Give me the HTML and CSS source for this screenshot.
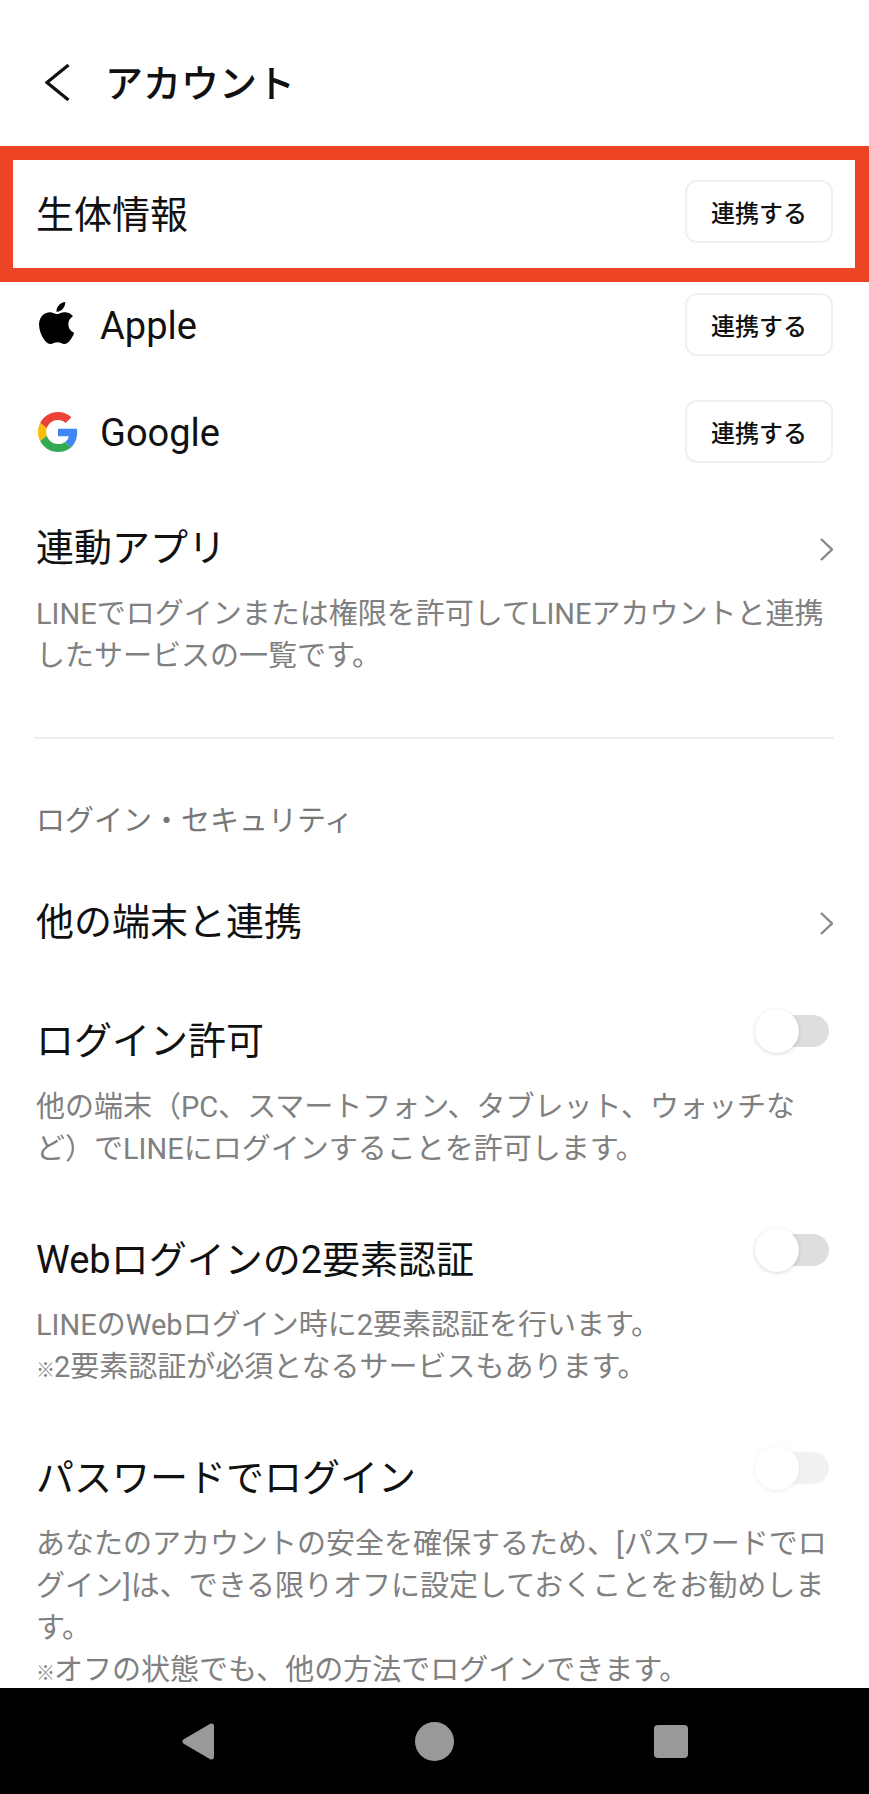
FILE: index.html
```html
<!DOCTYPE html>
<html lang="ja">
<head>
<meta charset="utf-8">
<title>アカウント</title>
<link rel="stylesheet" href="styles.css">
</head>
<body>
<main class="content">
  <header class="header">
    <svg class="back" viewBox="0 0 25 37" aria-hidden="true"><path d="M23.5 1 2 18.5 23.5 36"/></svg>
    <h1 class="title">アカウント</h1>
  </header>

  <section class="highlight">
    <span class="row-label">生体情報</span>
    <button class="link-btn">連携する</button>
  </section>

  <section class="provider provider-apple">
    <span class="provider-icon">
      <svg class="apple" viewBox="2.2 0 19.5 24" preserveAspectRatio="none" aria-hidden="true"><path d="M12.152 6.896c-.948 0-2.415-1.078-3.96-1.04-2.04.027-3.91 1.183-4.961 3.014-2.117 3.675-.546 9.103 1.519 12.09 1.013 1.454 2.208 3.09 3.792 3.039 1.52-.065 2.09-.987 3.935-.987 1.831 0 2.35.987 3.96.948 1.637-.026 2.676-1.48 3.676-2.948 1.156-1.688 1.636-3.325 1.662-3.415-.039-.013-3.182-1.221-3.22-4.857-.026-3.04 2.48-4.494 2.597-4.559-1.429-2.09-3.623-2.324-4.39-2.376-2-.156-3.675 1.09-4.61 1.09zM15.53 3.83c.843-1.012 1.4-2.427 1.245-3.83-1.207.052-2.662.805-3.532 1.818-.78.896-1.454 2.338-1.273 3.714 1.338.104 2.715-.688 3.559-1.701"/></svg>
    </span>
    <span class="row-label">Apple</span>
    <button class="link-btn">連携する</button>
  </section>

  <section class="provider provider-google">
    <span class="provider-icon">
      <svg class="google" viewBox="0 0 48 48" aria-hidden="true">
        <path fill="#EA4335" d="M24 9.5c3.54 0 6.71 1.22 9.21 3.6l6.85-6.85C35.9 2.38 30.47 0 24 0 14.62 0 6.51 5.38 2.56 13.22l7.98 6.19C12.43 13.72 17.74 9.5 24 9.5z"/>
        <path fill="#4285F4" d="M46.98 24.55c0-1.57-.15-3.09-.38-4.55H24v9.02h12.94c-.58 2.96-2.26 5.48-4.78 7.18l7.73 6c4.51-4.18 7.09-10.36 7.09-17.65z"/>
        <path fill="#FBBC05" d="M10.53 28.59c-.48-1.45-.76-2.99-.76-4.59s.27-3.14.76-4.59l-7.98-6.19C.92 16.46 0 20.12 0 24c0 3.88.92 7.54 2.56 10.78l7.97-6.19z"/>
        <path fill="#34A853" d="M24 48c6.48 0 11.93-2.13 15.89-5.81l-7.73-6c-2.15 1.45-4.92 2.3-8.16 2.3-6.26 0-11.57-4.22-13.47-9.91l-7.98 6.19C6.51 42.62 14.62 48 24 48z"/>
      </svg>
    </span>
    <span class="row-label">Google</span>
    <button class="link-btn">連携する</button>
  </section>

  <section class="setting s-apps">
    <div class="setting-head">
      <span class="row-label">連動アプリ</span>
      <svg class="chev" viewBox="0 0 13 23" aria-hidden="true"><path d="M1 1l11 10.5L1 22"/></svg>
    </div>
    <p class="desc d-apps">LINEでログインまたは権限を許可してLINEアカウントと連携したサービスの一覧です。</p>
  </section>

  <hr class="divider">

  <h2 class="section-label">ログイン・セキュリティ</h2>

  <section class="setting s-devices">
    <div class="setting-head">
      <span class="row-label">他の端末と連携</span>
      <svg class="chev" viewBox="0 0 13 23" aria-hidden="true"><path d="M1 1l11 10.5L1 22"/></svg>
    </div>
  </section>

  <section class="setting s-allow">
    <div class="setting-head">
      <span class="row-label">ログイン許可</span>
      <span class="toggle"><span class="knob"></span></span>
    </div>
    <p class="desc d-allow">他の端末（PC、スマートフォン、タブレット、ウォッチなど）でLINEにログインすることを許可します。</p>
  </section>

  <section class="setting s-web">
    <div class="setting-head">
      <span class="row-label">Webログインの2要素認証</span>
      <span class="toggle"><span class="knob"></span></span>
    </div>
    <p class="desc d-web">LINEのWebログイン時に2要素認証を行います。<br><span class="note-mark">※</span>2要素認証が必須となるサービスもあります。</p>
  </section>

  <section class="setting s-pass">
    <div class="setting-head">
      <span class="row-label">パスワードでログイン</span>
      <span class="toggle toggle-disabled"><span class="knob"></span></span>
    </div>
    <p class="desc d-pass">あなたのアカウントの安全を確保するため、[パスワードでログイン]は、できる限りオフに設定しておくことをお勧めします。<br><span class="note-mark">※</span>オフの状態でも、他の方法でログインできます。</p>
  </section>
</main>

<nav class="navbar" aria-label="システムナビゲーション">
  <span class="nav-cell"><svg class="nav-back" viewBox="0 0 33 37" aria-hidden="true"><path d="M29.5 3 3 18.5 29.5 34z"/></svg></span>
  <span class="nav-cell"><span class="nav-home"></span></span>
  <span class="nav-cell"><span class="nav-recent"></span></span>
</nav>
</body>
</html>
```

FILE: styles.css
```css
* { box-sizing: border-box; }

html, body { margin: 0; padding: 0; }

body {
  width: 869px;
  height: 1794px;
  display: flex;
  flex-direction: column;
  overflow: hidden;
  background: #fff;
  color: #111;
  font-family: Roboto, "Noto Sans CJK JP", sans-serif;
}

.content {
  flex: 1;
  min-height: 0;
}

.header {
  height: 146px;
  padding: 18px 0 0 45px;
  display: flex;
  align-items: center;
}

.back {
  width: 25px;
  height: 37px;
  fill: none;
  stroke: #111;
  stroke-width: 3.2;
}

.title {
  margin: 4px 0 0 35px;
  font-size: 38px;
  line-height: 50px;
  font-weight: 500;
  color: #111;
}

.row-label {
  font-size: 38px;
  line-height: 50px;
  font-weight: 400;
  color: #111;
}

.highlight {
  height: 136px;
  border: 14px solid #ee4426;
  border-left-width: 13px;
  padding: 6px 22px 11px 23px;
  display: flex;
  align-items: center;
  justify-content: space-between;
}

.highlight .row-label { margin-top: 6px; }

.link-btn {
  width: 148px;
  height: 63px;
  margin-left: auto;
  padding: 0;
  background: #fff;
  border: 2px solid #f0f0f0;
  border-radius: 12px;
  font-family: inherit;
  font-size: 24px;
  font-weight: 500;
  color: #111;
}

.provider {
  height: 63px;
  padding: 0 36px;
  display: flex;
  align-items: center;
}

.provider .row-label { margin-top: 2px; }

.provider-apple { margin-top: 11px; }
.provider-google { margin-top: 44px; }

.provider-icon {
  width: 64px;
  display: flex;
}

.apple {
  width: 35px;
  height: 42px;
  margin: -4px 0 0 3px;
  fill: #000;
}

.google {
  width: 40px;
  height: 40px;
  margin: 1px 0 0 2px;
}

.setting { padding: 0 36px; }

.setting-head {
  display: flex;
  align-items: center;
  justify-content: space-between;
  height: 50px;
}

.s-apps { margin-top: 60px; }
.s-devices { margin-top: 55px; }
.s-allow { margin-top: 69px; }
.s-web { margin-top: 65px; }
.s-pass { margin-top: 65px; }

.chev {
  width: 13px;
  height: 23px;
  margin-top: 2px;
  fill: none;
  stroke: #888;
  stroke-width: 2.4;
}

.desc {
  margin: 0;
  font-size: 29px;
  line-height: 42px;
  color: #808080;
}

.note-mark {
  font-size: 19px;
  line-height: 1;
  letter-spacing: -1px;
}

.d-apps { margin-top: 20px; }
.d-allow { margin-top: 20px; }
.d-web { margin-top: 19px; }
.d-pass { margin-top: 20px; }

.divider {
  height: 2px;
  margin: 60px 35px 0 34px;
  border: 0;
  background: #eeeeee;
}

.section-label {
  margin: 61px 0 0 36px;
  font-size: 29px;
  line-height: 42px;
  font-weight: 400;
  color: #777;
}

.toggle {
  position: relative;
  width: 54px;
  height: 32px;
  margin: -20px 4px 0 0;
  border-radius: 16px;
  background: #dedede;
}

.knob {
  position: absolute;
  left: -20px;
  top: -6px;
  width: 44px;
  height: 44px;
  border-radius: 50%;
  background: #fff;
  box-shadow: 0 1px 4px rgba(0, 0, 0, 0.16);
}

.toggle-disabled { opacity: 0.4; }

.navbar {
  height: 106px;
  flex: none;
  background: #000;
  display: flex;
  align-items: center;
  justify-content: center;
}

.nav-cell {
  width: 236px;
  display: flex;
  justify-content: center;
}

.nav-back {
  width: 33px;
  height: 37px;
  fill: #999;
  stroke: #999;
  stroke-width: 5;
  stroke-linejoin: round;
}

.nav-home {
  width: 39px;
  height: 39px;
  border-radius: 50%;
  background: #999;
}

.nav-recent {
  width: 34px;
  height: 33px;
  border-radius: 4px;
  background: #999;
}
```
